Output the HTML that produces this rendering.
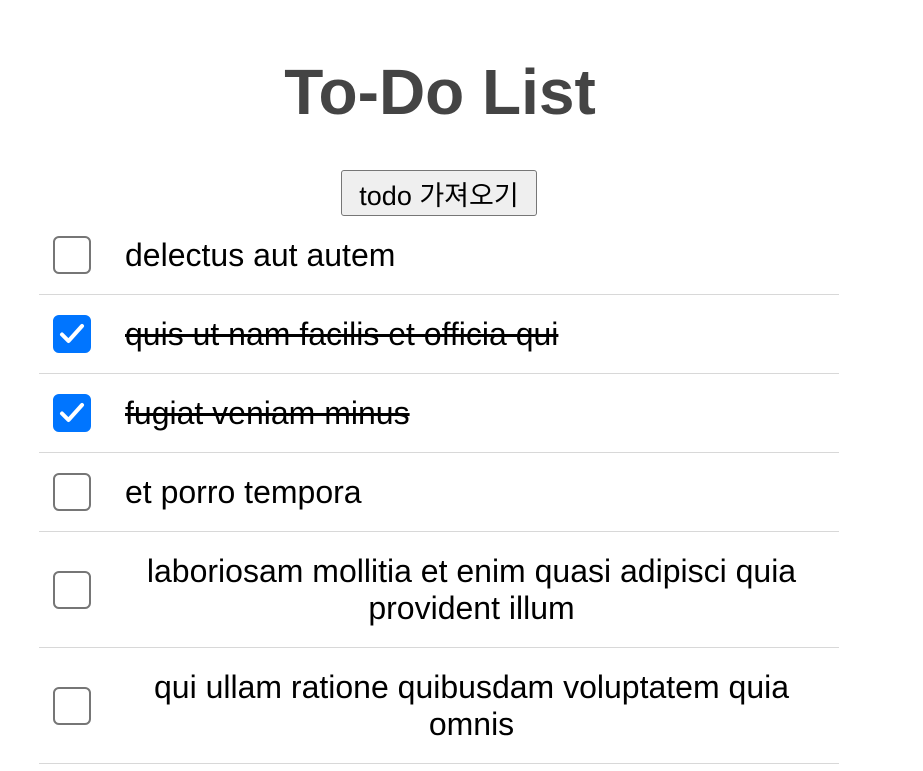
<!DOCTYPE html>
<html><head><meta charset="utf-8"><style>
body{margin:0;background:#fff;font-family:"Liberation Sans","Noto Sans CJK KR",sans-serif;width:923px;height:771px;overflow:hidden}
h1{position:absolute;left:0;width:880px;top:52px;margin:0;text-align:center;font-size:64px;font-weight:bold;color:#444;line-height:80px}
button{position:absolute;left:341px;top:170px;width:196px;height:46px;font-family:"Liberation Sans","Noto Sans CJK KR",sans-serif;font-size:27px;background:#efefef;border:1px solid #767676;border-radius:3px;color:#000;padding:0;white-space:nowrap}
ul{position:absolute;left:39px;top:216px;width:800px;margin:0;padding:0;list-style:none}
li{display:flex;align-items:center;padding:20px 21px 20px 14px;border-bottom:1px solid #d8d8d8}
li.w{padding-top:21px;padding-bottom:20px}
.cb{width:34px;height:34px;border:2px solid #767676;border-radius:6px;flex:none;box-sizing:content-box}
.cb.on{background:#0075ff;border-color:#0075ff;position:relative}
.cb.on svg{position:absolute;left:4px;top:4px}
.t{margin-left:34px;font-size:32px;line-height:37px;text-align:center;color:#000}
.s{text-decoration:line-through}
</style></head><body>
<h1>To-Do List</h1>
<button>todo 가져오기</button>
<ul>
<li><span class="cb"></span><span class="t">delectus aut autem</span></li>
<li><span class="cb on"><svg width="26" height="26" viewBox="0 0 26 26"><path d="M3 13.5l6.5 6.5L23 5" stroke="#fff" stroke-width="4" fill="none" stroke-linecap="round" stroke-linejoin="round"/></svg></span><span class="t s">quis ut nam facilis et officia qui</span></li>
<li><span class="cb on"><svg width="26" height="26" viewBox="0 0 26 26"><path d="M3 13.5l6.5 6.5L23 5" stroke="#fff" stroke-width="4" fill="none" stroke-linecap="round" stroke-linejoin="round"/></svg></span><span class="t s">fugiat veniam minus</span></li>
<li><span class="cb"></span><span class="t">et porro tempora</span></li>
<li class="w"><span class="cb"></span><span class="t">laboriosam mollitia et enim quasi adipisci quia provident illum</span></li>
<li class="w"><span class="cb"></span><span class="t">qui ullam ratione quibusdam voluptatem quia omnis</span></li>
</ul>
</body></html>
